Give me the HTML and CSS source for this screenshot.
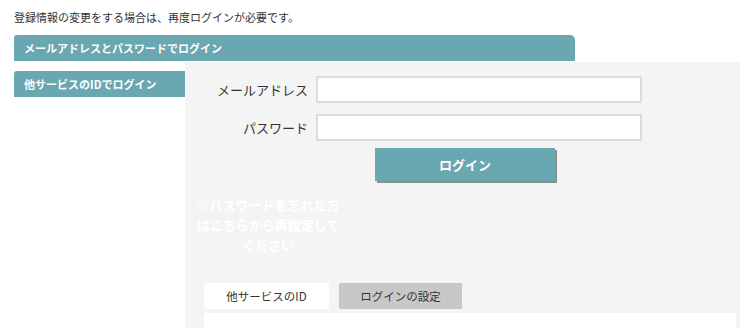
FILE: index.html
```html
<!DOCTYPE html>
<html lang="ja">
<head>
    <meta charset="UTF-8">
    <meta name="viewport" content="width=device-width, initial-scale=1.0">
    <title>ログイン</title>
    <link rel="stylesheet" href="styles.css">
</head>
<body>
    <p class="notice">登録情報の変更をする場合は、再度ログインが必要です。</p>

    <div class="tab-bar">メールアドレスとパスワードでログイン</div>

    <div class="login-area">
        <div class="side">
            <div class="side-tab">他サービスのIDでログイン</div>
        </div>

        <div class="panel">
            <form class="login-form">
                <div class="form-row">
                    <label for="email">メールアドレス</label>
                    <input type="text" id="email">
                </div>
                <div class="form-row">
                    <label for="password">パスワード</label>
                    <input type="password" id="password">
                </div>
                <div class="button-row">
                    <button type="submit">ログイン</button>
                </div>
            </form>

            <p class="forgot">※パスワードを忘れた方はこちらから再設定してください</p>

            <div class="sub-tabs">
                <div class="sub-tab active">他サービスのID</div>
                <div class="sub-tab">ログインの設定</div>
            </div>
            <div class="sub-body"></div>
        </div>
    </div>
</body>
</html>
```

FILE: styles.css
```css
body {
    font-family: "Noto Sans CJK JP", "Noto Sans", sans-serif;
    color: #333;
    margin: 0;
    padding: 8px 0 0 14px;
    overflow: hidden;
}

.notice {
    margin: 0;
    font-size: 11px;
    line-height: 19px;
}

.tab-bar {
    margin-top: 8px;
    width: 561px;
    height: 26px;
    line-height: 26px;
    box-sizing: border-box;
    padding-left: 10px;
    background-color: #69a7b1;
    color: white;
    font-size: 11px;
    font-weight: bold;
    border-radius: 3px 5px 0 0;
}

.login-area {
    display: flex;
    margin-top: 1px;
}

.side {
    width: 171px;
    padding-top: 9px;
}

.side-tab {
    height: 26px;
    line-height: 26px;
    padding-left: 10px;
    background-color: #69a7b1;
    color: white;
    font-size: 11px;
    font-weight: bold;
    border-radius: 3px 0 0 0;
}

.panel {
    width: 555px;
    flex-shrink: 0;
    height: 266px;
    background-color: #f4f4f4;
    padding: 14px 4px 0 0;
    box-sizing: border-box;
}

.form-row {
    display: flex;
    align-items: center;
    gap: 8px;
    margin-bottom: 11px;
}

.form-row label {
    width: 123px;
    text-align: right;
    font-size: 13px;
}

.form-row input {
    width: 326px;
    height: 27px;
    box-sizing: border-box;
    border: 2px solid #dcdcdc;
    background: white;
    margin: 0;
}

.button-row {
    padding-left: 190px;
    margin-top: -4px;
}

.button-row button {
    width: 180px;
    height: 33px;
    background-color: #69a7b1;
    color: white;
    border: none;
    font-family: inherit;
    font-size: 13px;
    font-weight: bold;
    box-shadow: 2px 2px 0 #8e8e8e;
    cursor: pointer;
}

.forgot {
    width: 152px;
    margin: 14px 0 0 7px;
    color: white;
    font-size: 13px;
    font-weight: bold;
    line-height: 20px;
    text-align: center;
}

.sub-tabs {
    display: flex;
    gap: 10px;
    margin: 28px 0 0 19px;
}

.sub-tab {
    width: 123px;
    height: 26px;
    line-height: 26px;
    text-align: center;
    font-size: 11.5px;
    background-color: #c8c8c8;
}

.sub-tab.active {
    width: 125px;
    background-color: white;
}

.sub-body {
    margin: 4px 0 0 19px;
    height: 20px;
    background-color: white;
}
```
